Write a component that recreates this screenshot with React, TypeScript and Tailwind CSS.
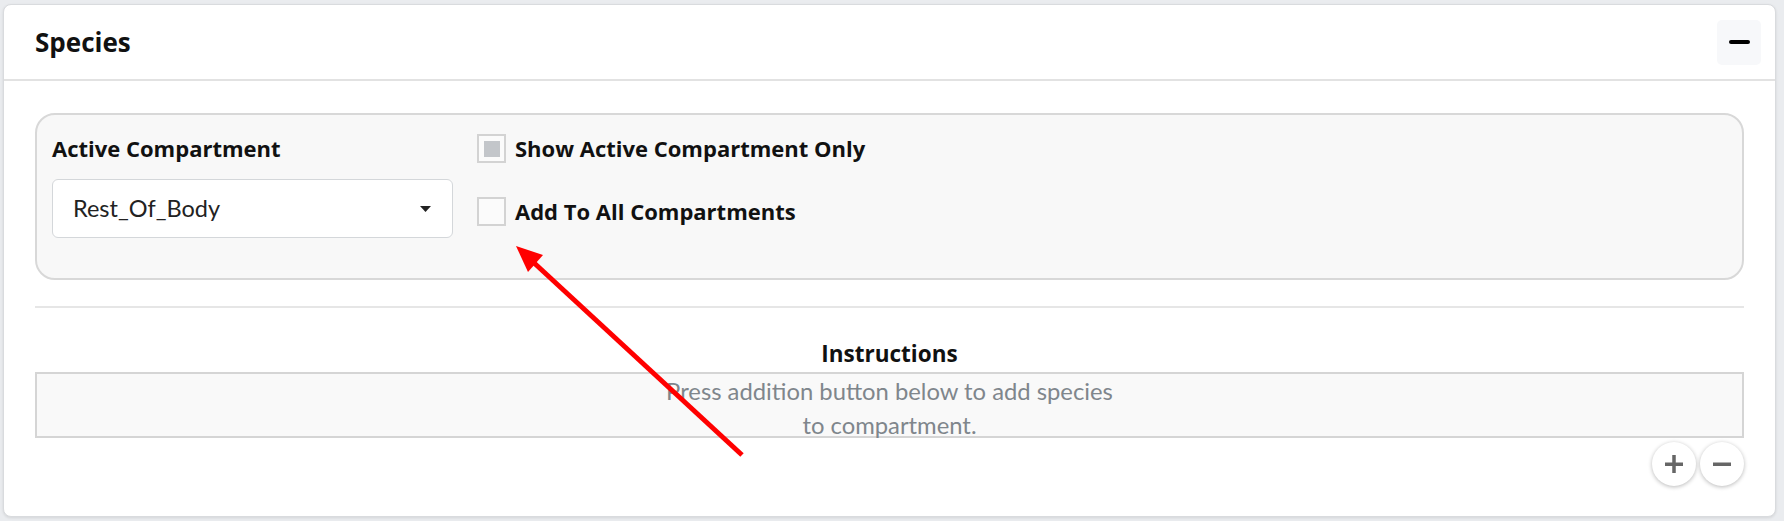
import React from "react";

const Checkbox = ({ checked }: { checked?: boolean }) => (
  <span className="flex h-[29px] w-[29px] shrink-0 items-center justify-center border-2 border-[#d3d3d3] bg-[#fbfbfb]">
    {checked && <span className="h-[16px] w-[16px] bg-[#c3c6ca]" />}
  </span>
);

const CircleButton = ({ kind }: { kind: "plus" | "minus" }) => (
  <button className="flex h-[44px] w-[44px] items-center justify-center rounded-full bg-white shadow-[0_1px_4px_rgba(0,0,0,0.28)]">
    <svg width="18" height="18" viewBox="0 0 18 18">
      <rect x="0" y="7.5" width="18" height="3.5" fill="#666" />
      {kind === "plus" && <rect x="7.25" y="0" width="3.5" height="18" fill="#666" />}
    </svg>
  </button>
);

const bold = "font-['Open_Sans',sans-serif] font-bold text-[#111]";

export default function App() {
  return (
    <div className="relative h-[521px] w-[1784px] bg-[#eaecef] pb-[4px] pl-[3px] pr-[8px] pt-[4px] font-['Lato',sans-serif]">
      <div className="flex h-full flex-col rounded-[8px] border border-[#d9dbde] bg-white shadow-[0_1px_3px_rgba(0,0,0,0.1)]">
        {/* header */}
        <div className="flex h-[76px] items-center justify-between border-b-2 border-[#e2e2e2] pl-[31px] pr-[14px]">
          <h2 className={`text-[26px] ${bold}`}>Species</h2>
          <button className="flex h-[45px] w-[44px] items-center justify-center rounded-[5px] bg-[#f7f8fa]">
            <span className="h-[4px] w-[21px] rounded-[2px] bg-black" />
          </button>
        </div>

        {/* body */}
        <div className="px-[31px] pt-[32px]">
          <div className="flex h-[167px] gap-[24px] rounded-[20px] border-2 border-[#d8d8d8] bg-[#f8f8f8] pl-[15px] pt-[17px]">
            <div className="w-[401px]">
              <div className={`text-[22px] leading-[33px] ${bold}`}>Active Compartment</div>
              <div className="mt-[14px] flex h-[59px] items-center justify-between rounded-[6px] border border-[#d4d7da] bg-white pl-[20px] pr-[21px]">
                <span className="text-[23.5px] text-[#222]">Rest_Of_Body</span>
                <svg width="11" height="6" viewBox="0 0 11 6">
                  <path d="M0 0 L11 0 L5.5 6 Z" fill="#222" />
                </svg>
              </div>
            </div>
            <div className="flex flex-col">
              <label className="flex h-[33px] items-center gap-[9px]">
                <Checkbox checked />
                <span className={`text-[22px] ${bold}`}>Show Active Compartment Only</span>
              </label>
              <label className="mt-[30px] flex h-[33px] items-center gap-[9px]">
                <Checkbox />
                <span className={`text-[22px] ${bold}`}>Add To All Compartments</span>
              </label>
            </div>
          </div>

          <div className="mt-[26px] h-[2px] bg-[#e6e6e6]" />

          <div className={`mt-[29px] text-center text-[22.5px] leading-[33px] ${bold}`}>Instructions</div>
          <div className="mt-[2px] h-[66px] border-2 border-[#d5d5d5] bg-[#f9f9f9] text-center text-[23.8px] leading-[34px] text-[#7f868c]">
            Press addition button below to add species
            <br />
            to compartment.
          </div>

          <div className="mt-[4px] flex justify-end gap-[4px]">
            <CircleButton kind="plus" />
            <CircleButton kind="minus" />
          </div>
        </div>
      </div>

      {/* red annotation arrow */}
      <svg className="pointer-events-none absolute left-0 top-0" width="1784" height="521">
        <line x1="742" y1="455" x2="532" y2="261" stroke="#ff0000" strokeWidth="5" />
        <path d="M516 246 L543 255 L528 272 Z" fill="#ff0000" />
      </svg>
    </div>
  );
}
